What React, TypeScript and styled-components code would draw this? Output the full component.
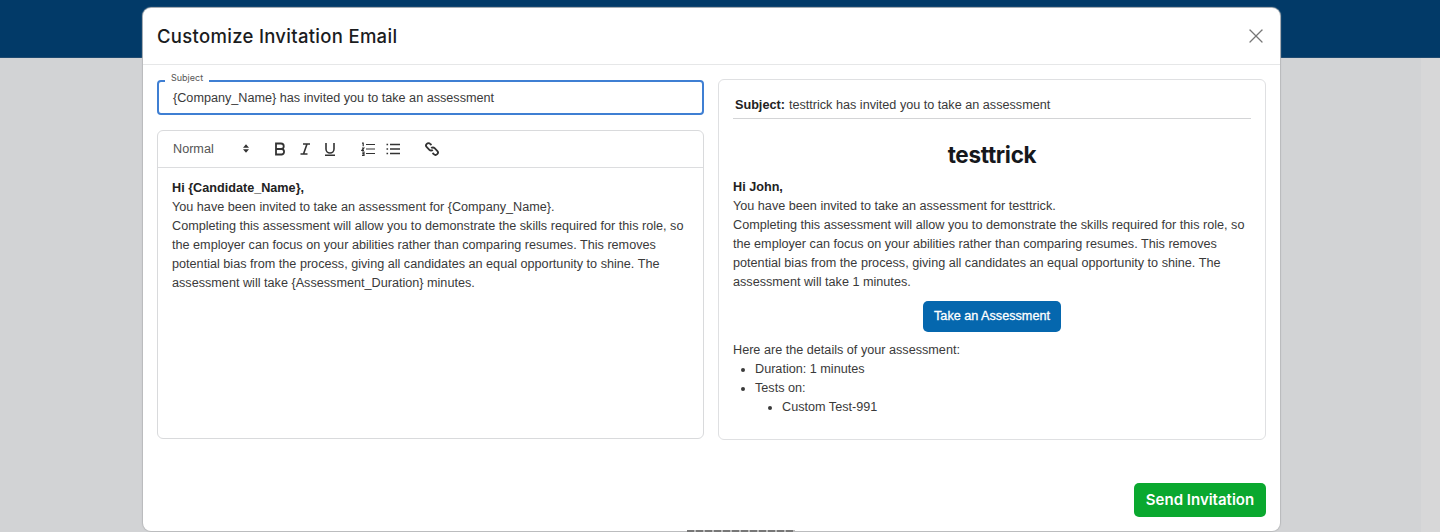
import React from "react";
import styled, { createGlobalStyle } from "styled-components";
import { X } from "lucide-react";

const GlobalStyle = createGlobalStyle`
  html, body {
    margin: 0;
    padding: 0;
    height: 100%;
    overflow: hidden;
    background: #d2d3d5;
    font-family: "Liberation Sans", Arial, sans-serif;
  }
  * {
    box-sizing: border-box;
  }
`;

const Page = styled.div`
  position: relative;
  width: 1440px;
  height: 532px;
  display: flex;
  flex-direction: column;
  overflow: hidden;
  background: #d2d3d5;
`;

const TopBar = styled.div`
  height: 58px;
  flex-shrink: 0;
  background: #023a68;
  border-bottom: 1px solid #1f4a70;
`;

const Backdrop = styled.div`
  flex: 1;
  display: flex;
  justify-content: flex-end;
`;

const ScrollTrack = styled.div`
  width: 19px;
  background: #d7d7d8;
`;

const Modal = styled.div`
  position: absolute;
  top: 8px;
  left: 143px;
  width: 1137px;
  height: 523px;
  display: flex;
  flex-direction: column;
  background: #fff;
  border-radius: 8px;
  box-shadow: 0 0 1px 1px #b9babc;
`;

/* tops of a line of page text poking out under the modal, too cut off to read */
const PeekMark = styled.div`
  position: absolute;
  left: 687px;
  bottom: 0;
  width: 108px;
  height: 2px;
  background: repeating-linear-gradient(90deg, #777 0 7px, #bbb 7px 9px);
`;

const ModalHeader = styled.div`
  height: 57px;
  flex-shrink: 0;
  display: flex;
  align-items: center;
  justify-content: space-between;
  padding: 0 12px 1px 14px;
  border-bottom: 1px solid #e6e7e8;
`;

const Title = styled.h1`
  margin: 0;
  font-family: "Inter", "Noto Sans", sans-serif;
  font-size: 18.5px;
  font-weight: 500;
  letter-spacing: 0.3px;
  color: #1b1c1e;
`;

const CloseButton = styled.button`
  display: flex;
  padding: 0;
  border: 0;
  background: none;
  color: #777;
`;

const ModalBody = styled.div`
  flex: 1;
  display: grid;
  grid-template-columns: 547px 548px;
  column-gap: 14px;
  padding: 14px 14px 0;
  align-items: start;
`;

const Column = styled.div`
  display: flex;
  flex-direction: column;
  gap: 15px;
  padding-top: 1px;
`;

const SubjectField = styled.div`
  position: relative;
  height: 35px;
  display: flex;
  align-items: center;
  padding: 0 14px;
  border: 2px solid #3f7fd3;
  border-radius: 4px;
  font-size: 12.65px;
  color: #3a3a3a;
`;

const FieldLabel = styled.span`
  position: absolute;
  top: -10px;
  left: 6px;
  padding: 0 6px;
  background: #fff;
  font-family: "Inter", "Noto Sans", sans-serif;
  font-size: 9px;
  line-height: 12px;
  color: #555;
`;

const Editor = styled.div`
  height: 309px;
  border: 1px solid #d9dadc;
  border-radius: 6px;
`;

const Toolbar = styled.div`
  height: 37px;
  display: flex;
  align-items: center;
  padding-left: 15px;
  border-bottom: 1px solid #dcdddf;
  color: #333;
`;

const FormatSelect = styled.div`
  width: 76px;
  display: flex;
  align-items: center;
  justify-content: space-between;
  margin-right: 24px;
  padding-bottom: 1px;
  font-size: 12.65px;
  color: #555;
`;

const ToolGroup = styled.div<{ $gap: number; $after: number }>`
  display: flex;
  align-items: center;
  gap: ${(props) => props.$gap}px;
  margin-right: ${(props) => props.$after}px;
`;

const ToolIcon = styled.svg`
  display: block;
  width: 14px;
  height: 14px;
  fill: none;
  stroke: #333;
  stroke-width: 1.6;
`;

const EditorText = styled.div`
  padding: 11px 14px;
  font-size: 12.65px;
  line-height: 19px;
  color: #3a3a3a;
`;

const Preview = styled.div`
  height: 361px;
  padding: 0 14px;
  border: 1px solid #dfe0e2;
  border-radius: 6px;
  font-size: 12.65px;
  line-height: 19px;
  color: #3a3a3a;
`;

const PreviewSubject = styled.div`
  height: 39px;
  display: flex;
  align-items: center;
  gap: 4px;
  padding: 12px 2px 0;
  border-bottom: 1px solid #d3d4d6;

  b {
    color: #222;
  }
`;

const Logo = styled.div`
  margin: 19px 0 6px;
  text-align: center;
  font-family: "Inter", sans-serif;
  font-size: 22.5px;
  line-height: 34px;
  font-weight: 700;
  letter-spacing: -0.3px;
  color: #16181c;
`;

const Greeting = styled.div`
  font-weight: 700;
  color: #222;
`;

const CtaRow = styled.div`
  display: flex;
  justify-content: center;
  margin: 9px 0;
`;

const Cta = styled.a`
  width: 138px;
  height: 31px;
  display: flex;
  align-items: center;
  justify-content: center;
  border-radius: 5px;
  background: #0567ae;
  color: #fff;
  font-size: 12.65px;
  -webkit-text-stroke: 0.3px #fff;
`;

const DetailList = styled.ul<{ $nested?: boolean }>`
  margin: 0;
  padding-left: ${(props) => (props.$nested ? 27 : 22)}px;
  list-style-type: disc;
`;

const Footer = styled.div`
  display: flex;
  justify-content: flex-end;
  padding: 0 14px 14px;
`;

const SendButton = styled.button`
  width: 132px;
  height: 34px;
  padding: 0 0 2px;
  border: 0;
  border-radius: 5px;
  background: #0aa82f;
  color: #fff;
  font-family: "Inter", "Noto Sans", sans-serif;
  font-size: 15px;
  font-weight: 600;
`;

const Sentence = () => (
  <>
    Completing this assessment will allow you to demonstrate the skills required for this role, so
    <br />
    the employer can focus on your abilities rather than comparing resumes. This removes
    <br />
    potential bias from the process, giving all candidates an equal opportunity to shine. The
    <br />
  </>
);

export default function App() {
  return (
    <Page>
      <GlobalStyle />
      <TopBar />
      <Backdrop>
        <ScrollTrack />
      </Backdrop>
      <Modal>
        <ModalHeader>
          <Title>Customize Invitation Email</Title>
          <CloseButton aria-label="Close">
            <X size={24} strokeWidth={1.3} />
          </CloseButton>
        </ModalHeader>
        <ModalBody>
          <Column>
            <SubjectField>
              <FieldLabel>Subject</FieldLabel>
              {"{Company_Name} has invited you to take an assessment"}
            </SubjectField>
            <Editor>
              <Toolbar>
                <FormatSelect>
                  Normal
                  <svg width="6" height="9" viewBox="0 0 7 10" fill="#333">
                    <path d="M3.5 0 7 4H0zM3.5 10 0 6h7z" />
                  </svg>
                </FormatSelect>
                <ToolGroup $gap={11} $after={24}>
                  <ToolIcon viewBox="0 0 14 14" style={{ strokeWidth: 1.8 }}>
                    <path d="M3 1.5h5a2.7 2.7 0 0 1 0 5.5H3zM3 7h5.8a2.8 2.8 0 0 1 0 5.5H3z" />
                  </ToolIcon>
                  <ToolIcon viewBox="0 0 14 14">
                    <path d="M5 2h7M2.5 12h7M9 2 5.5 12" />
                  </ToolIcon>
                  <ToolIcon viewBox="0 0 14 14">
                    <path d="M3 1v6a4 4 0 0 0 8 0V1M2 13.2h10" />
                  </ToolIcon>
                </ToolGroup>
                <ToolGroup $gap={11} $after={25}>
                  <ToolIcon viewBox="0 0 14 14">
                    <path d="M5 2.5h9M5 7h9M5 11.5h9M1 1.2h1.2v3M1 6h1.8L1 8.3h2M1 10h2v3.4H1M1.3 11.7h1.5" style={{ strokeWidth: 1.2 }} />
                  </ToolIcon>
                  <ToolIcon viewBox="0 0 14 14">
                    <path d="M4 2.5h10M4 7h10M4 11.5h10M0.5 2.5h1.6M0.5 7h1.6M0.5 11.5h1.6" />
                  </ToolIcon>
                </ToolGroup>
                <ToolIcon viewBox="0 0 14 14" style={{ strokeWidth: 1.8 }}>
                  <path d="M6.5 3 5.2 1.8a2.4 2.4 0 0 0-3.4 3.4l2.6 2.6a2.4 2.4 0 0 0 3.4 0M7.5 11l1.3 1.2a2.4 2.4 0 0 0 3.4-3.4L9.6 6.2a2.4 2.4 0 0 0-3.4 0" />
                </ToolIcon>
              </Toolbar>
              <EditorText>
                <Greeting>{"Hi {Candidate_Name},"}</Greeting>
                {"You have been invited to take an assessment for {Company_Name}."}
                <br />
                <Sentence />
                {"assessment will take {Assessment_Duration} minutes."}
              </EditorText>
            </Editor>
          </Column>
          <Preview>
            <PreviewSubject>
              <b>Subject:</b> testtrick has invited you to take an assessment
            </PreviewSubject>
            <Logo>testtrick</Logo>
            <Greeting>Hi John,</Greeting>
            You have been invited to take an assessment for testtrick.
            <br />
            <Sentence />
            assessment will take 1 minutes.
            <CtaRow>
              <Cta>Take an Assessment</Cta>
            </CtaRow>
            Here are the details of your assessment:
            <DetailList>
              <li>Duration: 1 minutes</li>
              <li>
                Tests on:
                <DetailList $nested>
                  <li>Custom Test-991</li>
                </DetailList>
              </li>
            </DetailList>
          </Preview>
        </ModalBody>
        <Footer>
          <SendButton>Send Invitation</SendButton>
        </Footer>
      </Modal>
      <PeekMark />
    </Page>
  );
}
